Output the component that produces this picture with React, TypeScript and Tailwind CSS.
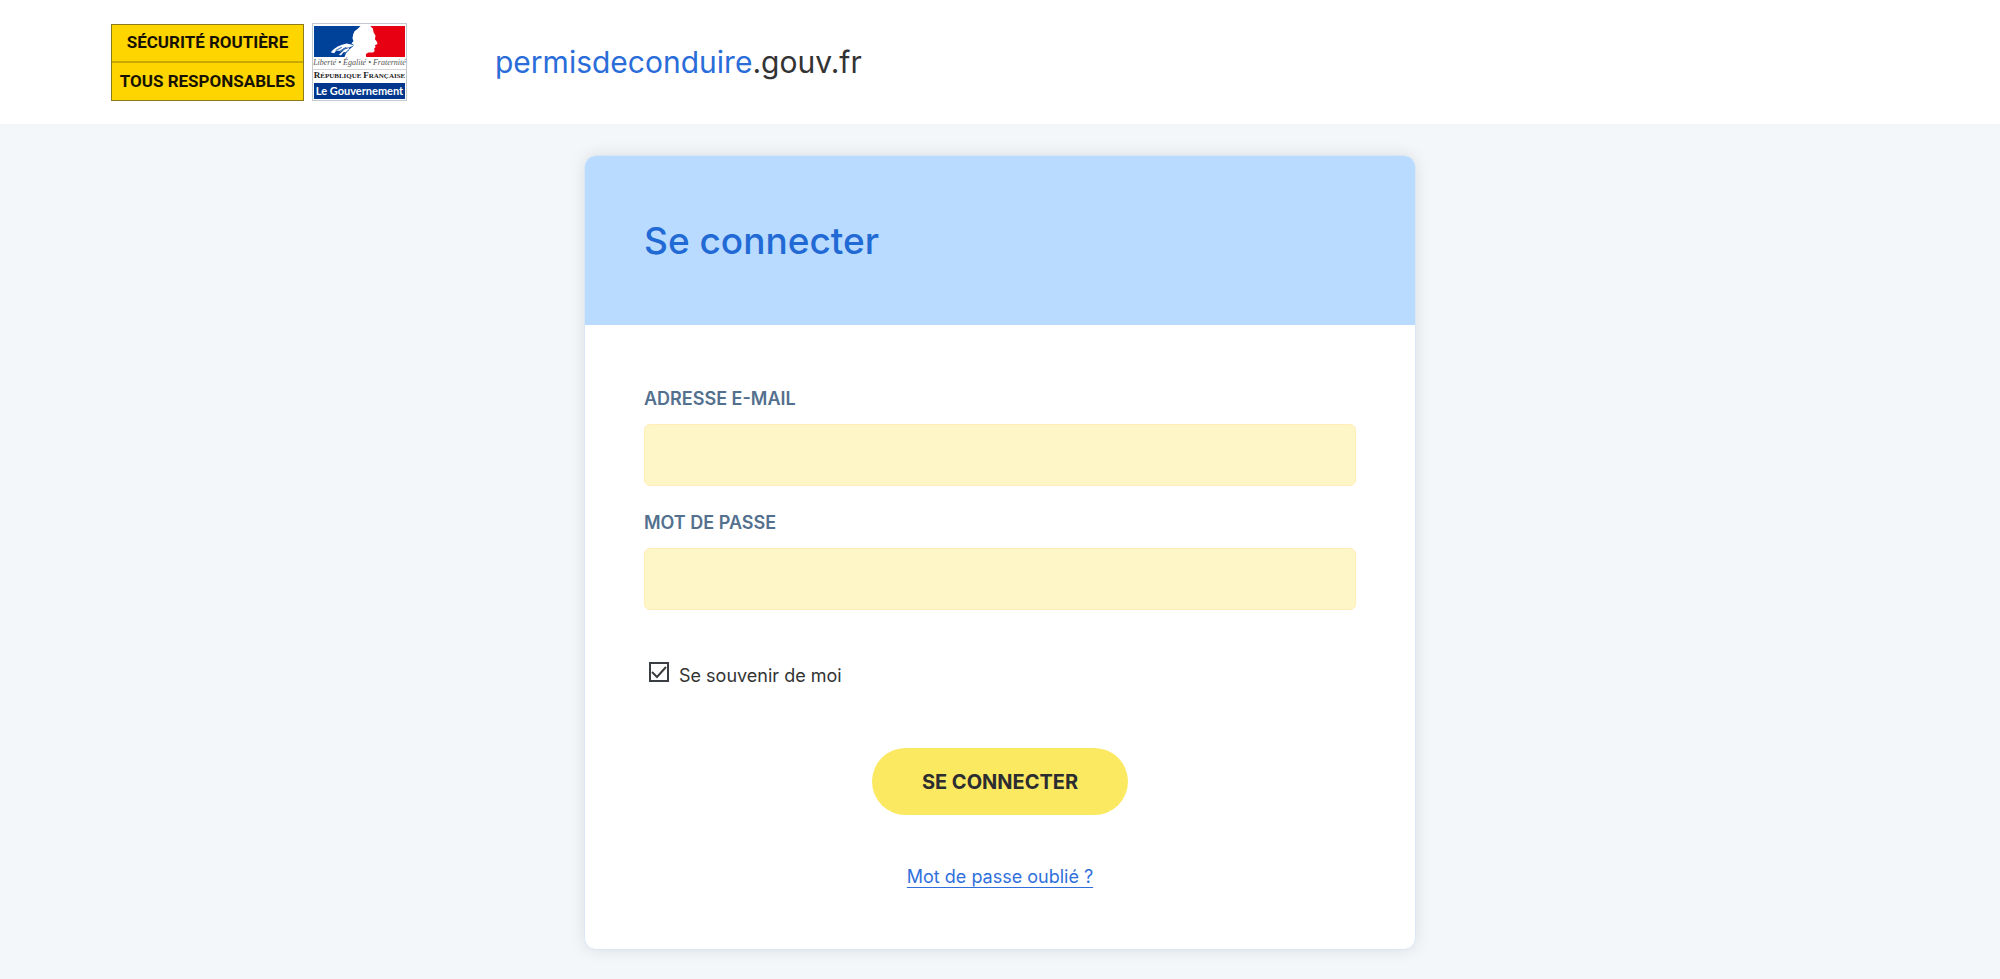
import { useState } from "react";
import type { FormEvent } from "react";

function LogoSecuriteRoutiere() {
  return (
    <div className="flex h-[77px] w-[193px] flex-col border border-[#8c7a1c] bg-[#ffd500] font-['Roboto',sans-serif] text-[17px] font-bold whitespace-nowrap text-[#171200]">
      <span className="flex flex-1 items-center justify-center border-b-2 border-[#c9a800]">SÉCURITÉ ROUTIÈRE</span>
      <span className="flex flex-1 items-center justify-center">TOUS RESPONSABLES</span>
    </div>
  );
}

function LogoGouvernement() {
  return (
    <div className="flex h-[78px] w-[95px] flex-col items-center border border-[#c4c8cf] bg-white pt-[2px] whitespace-nowrap">
      <svg viewBox="0 0 272 92" className="h-[31px] w-[91px]" aria-hidden="true">
        <rect width="272" height="92" fill="#fff" />
        <path d="M0 0H139L130 9L121 15L117 25L115 36L118 45L112 51L120 57L109 67L98 77L91 92H0Z" fill="#00429a" />
        <path d="M168 0H272V92H156L155 83L163 79L176 79L181 75L180 66L184 63L182 58L190 53L187 45L182 39L184 29L178 18L176 7Z" fill="#e60012" />
        <path d="M50 78C62 64 78 56 98 52L120 57L105 64L91 65L78 74L66 74L60 81Z" fill="#fff" />
        <path d="M74 86L91 70L106 65L100 77L88 78L81 87Z" fill="#fff" />
        <path d="M65 73L83 63M77 77L96 64M91 83L104 71" stroke="#4a78b8" strokeWidth="3" fill="none" />
      </svg>
      <span className="font-['Liberation_Serif',serif] text-[8px] leading-[12px] text-[#555] italic">Liberté • Égalité • Fraternité</span>
      <span className="w-full border-t border-[#d5d5d5] text-center font-['Liberation_Serif',serif] text-[7px] leading-[11px] font-bold text-[#222]">
        <span className="text-[9px]">R</span>ÉPUBLIQUE <span className="text-[9px]">F</span>RANÇAISE
      </span>
      <span className="mt-[1px] flex h-[16px] w-[91px] items-center justify-center bg-[#00378c] font-['Lato',sans-serif] text-[11px] font-bold text-white">
        Le Gouvernement
      </span>
    </div>
  );
}

interface ChampProps {
  id: string;
  label: string;
  type: string;
}

function Champ({ id, label, type }: ChampProps) {
  return (
    <div className="flex flex-col gap-3">
      <label htmlFor={id} className="text-[18px] leading-[26px] font-semibold text-[#53708e] uppercase">
        {label}
      </label>
      <input
        id={id}
        name={id}
        type={type}
        className="h-[62px] w-full rounded-md border border-[#ffecb8] bg-[#fff6c8] px-5 text-lg outline-none focus:border-[#2169d4]"
      />
    </div>
  );
}

export default function App() {
  const [souvenir, setSouvenir] = useState(true);

  const onConnecter = (e: FormEvent) => {
    e.preventDefault();
  };

  return (
    <div className="min-h-screen bg-[#f3f7fa] font-['Inter',sans-serif] text-[#333]">
      <header className="flex min-h-[124px] items-center bg-white px-6 lg:px-[111px]">
        <div className="flex items-center gap-2">
          <LogoSecuriteRoutiere />
          <LogoGouvernement />
        </div>
        <a href="#" className="ml-[88px] text-[30px] leading-[40px] text-[#333]">
          <span className="text-[#2a6dd9]">permisdeconduire</span>.gouv.fr
        </a>
      </header>

      <main className="flex justify-center px-4 pt-[31px] pb-[30px]">
        <section className="w-full max-w-[832px] overflow-hidden rounded-xl border border-[#dbe8f4] bg-white shadow-[0_0_16px_rgba(0,0,0,0.10)]">
          <div className="flex h-[169px] items-center bg-[#b9dbff] px-[59px]">
            <h1 className="text-[37px] leading-[44px] font-medium text-[#2169d4]">Se connecter</h1>
          </div>

          <form onSubmit={onConnecter} className="flex flex-col px-[59px] pt-[61px] pb-[58px]">
            <div className="flex flex-col gap-6">
              <Champ id="email" label="Adresse e-mail" type="email" />
              <Champ id="password" label="Mot de passe" type="password" />
            </div>

            <div className="mt-[52px] flex items-start gap-[10px] pl-[5px]">
              <span className="grid">
                <input
                  id="souvenir"
                  type="checkbox"
                  checked={souvenir}
                  onChange={(e) => setSouvenir(e.target.checked)}
                  className="peer col-start-1 row-start-1 size-5 appearance-none border-2 border-[#3a3d42] bg-white"
                />
                <svg
                  viewBox="0 0 20 20"
                  className="pointer-events-none invisible col-start-1 row-start-1 size-5 peer-checked:visible"
                  aria-hidden="true"
                >
                  <path d="M3 10L8 15L17 5" fill="none" stroke="#3a3d42" strokeWidth="2" />
                </svg>
              </span>
              <label htmlFor="souvenir" className="text-[18px] leading-[28px]">
                Se souvenir de moi
              </label>
            </div>

            <button
              type="submit"
              className="mt-[58px] h-[67px] w-[256px] cursor-pointer self-center rounded-full bg-[#fce962] text-[20px] font-bold text-[#2c2d30] uppercase hover:bg-[#f5de40]"
            >
              Se connecter
            </button>

            <a
              href="#"
              className="mt-12 self-center text-[18px] leading-[28px] text-[#2f70dc] underline decoration-1 underline-offset-4"
            >
              Mot de passe oublié ?
            </a>
          </form>
        </section>
      </main>
    </div>
  );
}
